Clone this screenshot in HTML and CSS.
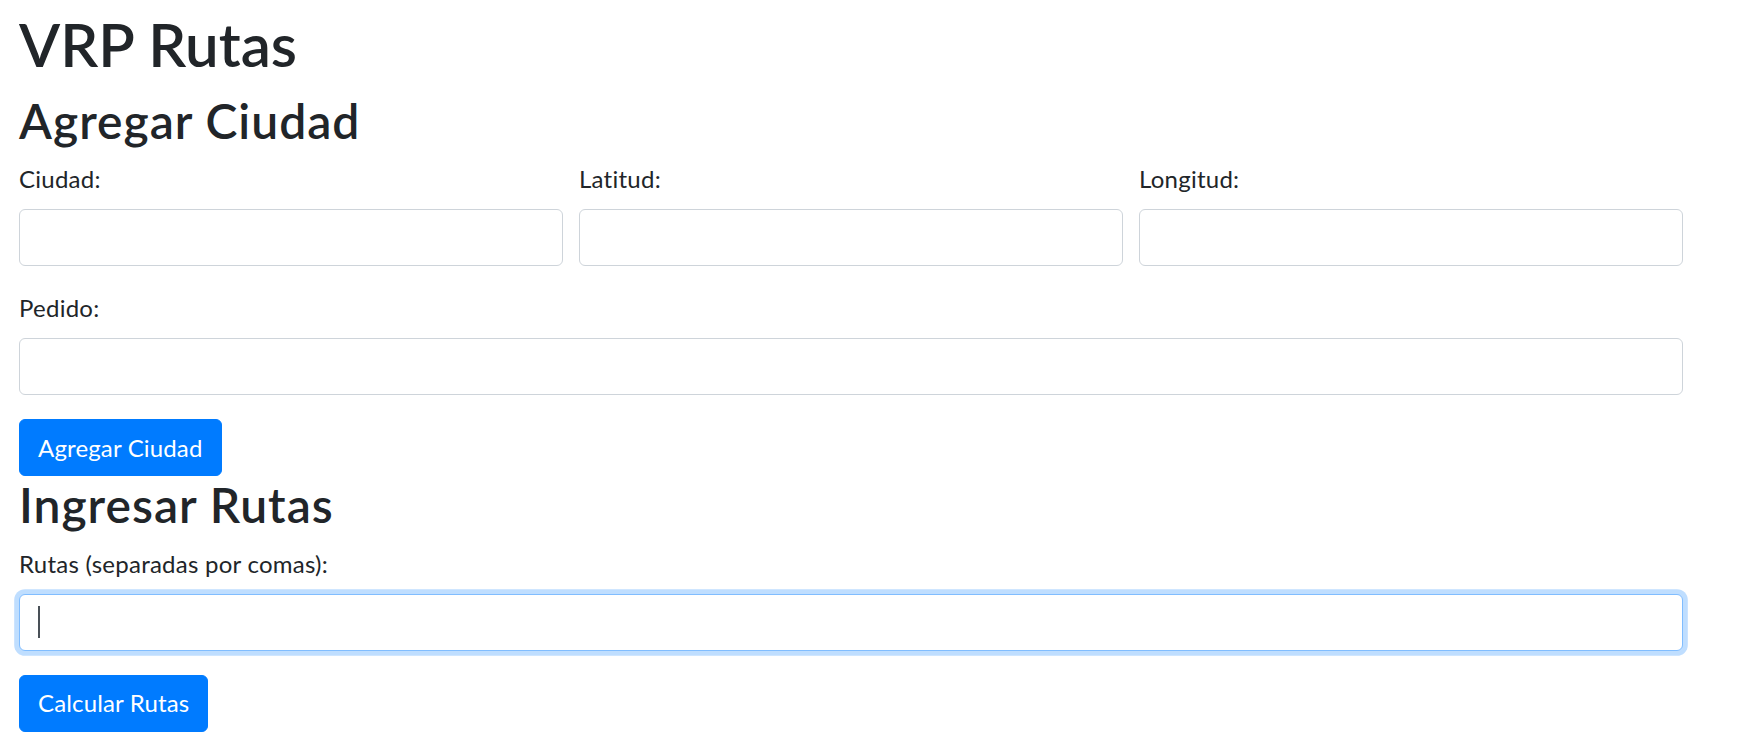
FILE: index.html
```html
<!DOCTYPE html>
<html lang="es">
<head>
<meta charset="utf-8">
<title>VRP Rutas</title>
<link rel="stylesheet" href="styles.css">
</head>
<body>
<div class="container">
  <h1 class="title">VRP Rutas</h1>
  <h2 class="section-title">Agregar Ciudad</h2>
  <form class="form">
    <div class="row-3">
      <div class="field">
        <label class="label" for="ciudad">Ciudad:</label>
        <input class="control" id="ciudad" type="text">
      </div>
      <div class="field">
        <label class="label" for="latitud">Latitud:</label>
        <input class="control" id="latitud" type="text">
      </div>
      <div class="field">
        <label class="label" for="longitud">Longitud:</label>
        <input class="control" id="longitud" type="text">
      </div>
    </div>
    <div class="field">
      <label class="label" for="pedido">Pedido:</label>
      <input class="control" id="pedido" type="text">
    </div>
    <button type="button" class="btn">Agregar Ciudad</button>
  </form>
  <h2 class="section-title">Ingresar Rutas</h2>
  <form class="form">
    <div class="field">
      <label class="label" for="rutas">Rutas (separadas por comas):</label>
      <div class="control-wrap">
        <input class="control control-focus" id="rutas" type="text">
        <span class="caret"></span>
      </div>
    </div>
    <button type="button" class="btn">Calcular Rutas</button>
  </form>
</div>
</body>
</html>
```

FILE: styles.css
```css
* { box-sizing: border-box; }
html, body { margin: 0; padding: 0; background: #fff; }
body {
  font-family: "Segoe UI", "Lato", sans-serif;
  font-size: 24px;
  line-height: 1.5;
  letter-spacing: 0.25px;
  color: #212529;
}
.container {
  padding: 7.5px 0 0 19px;
  width: 1683px;
}
.title {
  font-size: 60px;
  font-weight: 600;
  line-height: 72px;
  letter-spacing: 0;
  margin: 0 0 12px;
}
.section-title {
  font-size: 48px;
  font-weight: 600;
  line-height: 57.6px;
  letter-spacing: 1px;
  margin: 0 0 12px;
}
.form { margin: 0; }
.row-3 {
  display: grid;
  grid-template-columns: repeat(3, 1fr);
  column-gap: 16px;
}
.field {
  display: flex;
  flex-direction: column;
  margin-bottom: 24px;
}
.label {
  display: block;
  line-height: 36px;
  margin-bottom: 12px;
}
.control {
  display: block;
  width: 100%;
  height: 57px;
  padding: 9px 18px;
  font: inherit;
  color: #495057;
  background: #fff;
  border: 1.5px solid #ced4da;
  border-radius: 6px;
  outline: none;
}
.control-wrap { position: relative; }
.control-focus {
  border-color: #80bdff;
  box-shadow: 0 0 0 4.8px rgba(0, 123, 255, 0.25);
}
.caret {
  position: absolute;
  left: 19px;
  top: 12px;
  width: 1.5px;
  height: 32px;
  background: #495057;
}
.btn {
  display: inline-block;
  height: 57px;
  padding: 9px 18px;
  font: inherit;
  line-height: 36px;
  letter-spacing: 0.15px;
  color: #fff;
  background: #007bff;
  border: 1.5px solid #007bff;
  border-radius: 6px;
  cursor: pointer;
}
```
